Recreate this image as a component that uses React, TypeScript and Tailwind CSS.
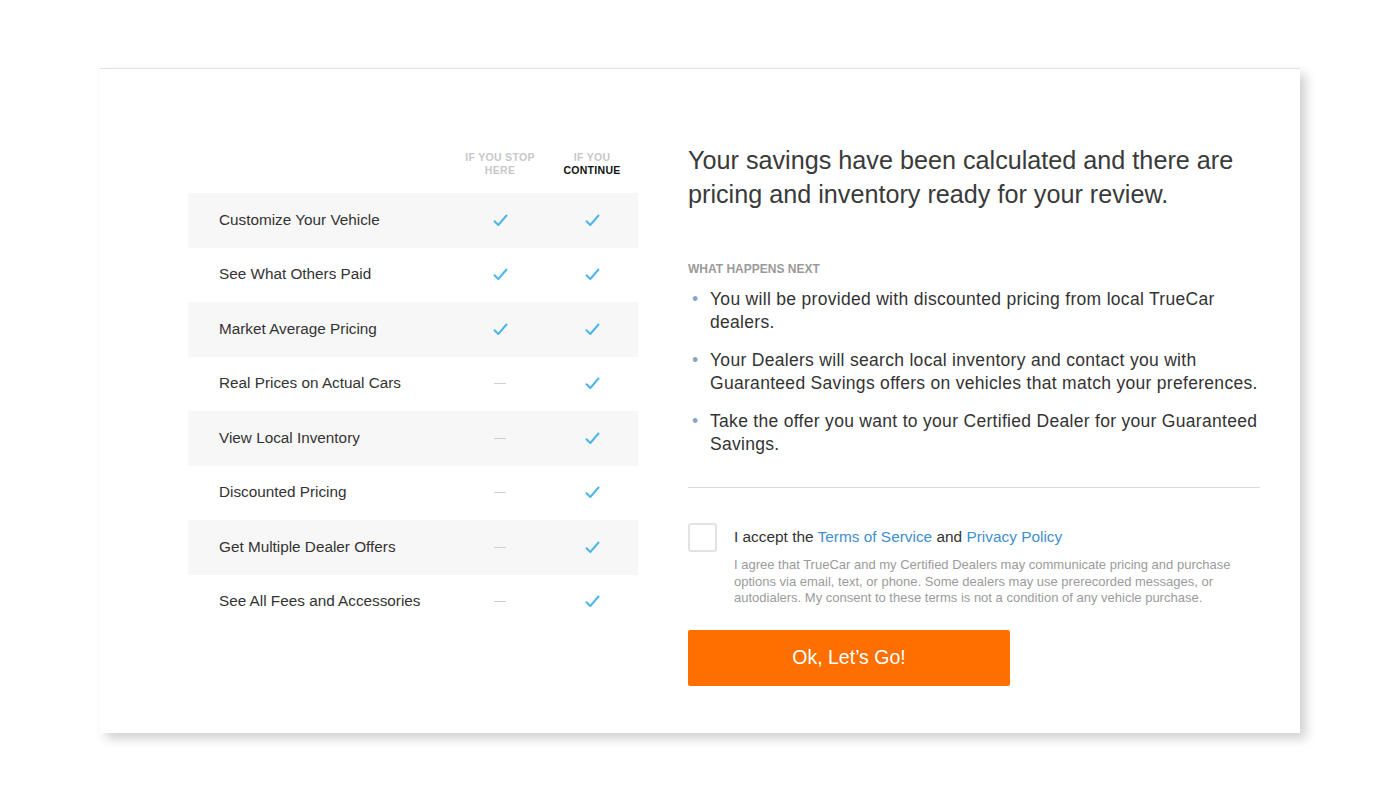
import React from "react";

const rows: { label: string; stop: boolean }[] = [
  { label: "Customize Your Vehicle", stop: true },
  { label: "See What Others Paid", stop: true },
  { label: "Market Average Pricing", stop: true },
  { label: "Real Prices on Actual Cars", stop: false },
  { label: "View Local Inventory", stop: false },
  { label: "Discounted Pricing", stop: false },
  { label: "Get Multiple Dealer Offers", stop: false },
  { label: "See All Fees and Accessories", stop: false },
];

function Check() {
  return (
    <svg width="15" height="13" viewBox="0 0 15 13" fill="none">
      <path d="M1.5 7.2 L5.3 11 L13.5 1.5" stroke="#4db6e8" strokeWidth="2" strokeLinecap="round" strokeLinejoin="round" />
    </svg>
  );
}

function Dash() {
  return <div className="w-[12px] h-px bg-[#cfcfcf]" />;
}

function Bullet({ children }: { children: React.ReactNode }) {
  return (
    <li className="flex">
      <span className="w-[22px] shrink-0 pl-[4px] text-[#8aa6c4]">•</span>
      <span className="whitespace-nowrap">{children}</span>
    </li>
  );
}

export default function App() {
  return (
    <div className="w-[1400px] h-[800px] bg-white pt-[68px] pl-[100px]" style={{ fontFamily: '"Liberation Sans", Arial, sans-serif' }}>
      <div className="w-[1200px] h-[665px] bg-white border-t border-[#e3e3e3] shadow-[6px_6px_10px_rgba(0,0,0,0.18)] flex pl-[88px] pt-[73px]">
        {/* Left table */}
        <div className="w-[450px] shrink-0">
          <div className="flex h-[51px] items-end pb-[16px]">
            <div className="w-[266px]" />
            <div className="w-[92px] text-center text-[10.5px] leading-[13px] font-bold text-[#c8c8c8] tracking-[0.3px]">
              IF YOU STOP<br />HERE
            </div>
            <div className="w-[92px] text-center text-[10.5px] leading-[13px] font-bold tracking-[0.3px]">
              <span className="text-[#c8c8c8]">IF YOU</span><br /><span className="text-[#111]">CONTINUE</span>
            </div>
          </div>
          {rows.map((r, i) => (
            <div key={r.label} className={`flex items-center h-[54.5px] ${i % 2 === 0 ? "bg-[#f7f7f7]" : "bg-white"}`}>
              <div className="w-[266px] pl-[31px] text-[15.3px] text-[#333]">{r.label}</div>
              <div className="w-[92px] flex justify-center">{r.stop ? <Check /> : <Dash />}</div>
              <div className="w-[92px] flex justify-center"><Check /></div>
            </div>
          ))}
        </div>

        {/* Right column */}
        <div className="ml-[50px] w-[572px] text-[#333]">
          <h1 className="mt-[1px] text-[25.2px] leading-[34px] text-[#3a3a3a] font-normal">
            Your savings have been calculated and there are pricing and inventory ready for your review.
          </h1>
          <div className="mt-[50px] text-[12px] font-bold text-[#9a9a9a] leading-[16px]">WHAT HAPPENS NEXT</div>
          <ul className="mt-[11px] flex flex-col gap-[15px] text-[17.5px] leading-[23px] tracking-[0.3px] text-[#333]">
            <Bullet>
              You will be provided with discounted pricing from local TrueCar<br />dealers.
            </Bullet>
            <Bullet>
              Your Dealers will search local inventory and contact you with<br />Guaranteed Savings offers on vehicles that match your preferences.
            </Bullet>
            <Bullet>
              Take the offer you want to your Certified Dealer for your Guaranteed<br />Savings.
            </Bullet>
          </ul>
          <div className="mt-[31px] h-px bg-[#d9d9d9]" />
          <div className="mt-[35px] flex">
            <div className="w-[29px] h-[29px] border-2 border-[#e2e2e2] rounded-[3px] shrink-0" />
            <div className="ml-[17px]">
              <div className="mt-[2px] text-[15.4px] leading-[24px] text-[#333]">
                I accept the <span className="text-[#3f8fcc]">Terms of Service</span> and <span className="text-[#3f8fcc]">Privacy Policy</span>
              </div>
              <div className="mt-[8px] text-[13px] leading-[16.5px] text-[#9b9b9b] whitespace-nowrap">
                I agree that TrueCar and my Certified Dealers may communicate pricing and purchase<br />
                options via email, text, or phone. Some dealers may use prerecorded messages, or<br />
                autodialers. My consent to these terms is not a condition of any vehicle purchase.
              </div>
            </div>
          </div>
          <button className="mt-[23px] w-[322px] h-[56px] bg-[#ff6f00] rounded-[2px] text-white text-[19.5px]">
            Ok, Let’s Go!
          </button>
        </div>
      </div>
    </div>
  );
}
